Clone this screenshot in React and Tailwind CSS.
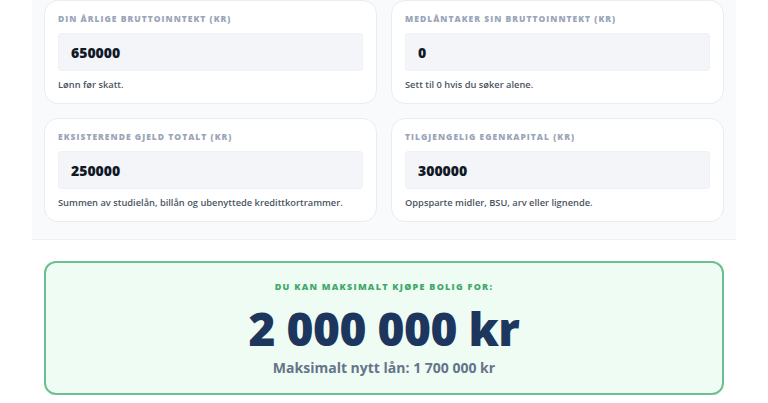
import React from 'react';

const fields = [
    { label: 'Din årlige bruttoinntekt (kr)', value: '650000', help: 'Lønn før skatt.' },
    { label: 'Medlåntaker sin bruttoinntekt (kr)', value: '0', help: 'Sett til 0 hvis du søker alene.' },
    { label: 'Eksisterende gjeld totalt (kr)', value: '250000', help: 'Summen av studielån, billån og ubenyttede kredittkortrammer.' },
    { label: 'Tilgjengelig egenkapital (kr)', value: '300000', help: 'Oppsparte midler, BSU, arv eller lignende.' },
];

const Field = ({ label, value, help }) => (
    <div className="bg-white border border-[#e8edf3] rounded-[14px] px-[13px] pt-[12px] pb-[12px]">
        <label className="block h-[12px] leading-[12px] text-[8.5px] font-extrabold uppercase tracking-[0.12em] text-[#9aa5b8]">
            {label}
        </label>
        <div className="mt-[8px] h-[38px] bg-[#f3f5f8] border border-[#eef1f5] rounded-[3px] flex items-center pl-[12px] text-[14px] font-extrabold text-[#111827]">
            {value}
        </div>
        <p className="mt-[8px] h-[12px] leading-[12px] text-[9.3px] font-semibold text-[#4b5563]">{help}</p>
    </div>
);

export default function App() {
    return (
        <div className="w-[768px] h-[403px] bg-white overflow-hidden" style={{ fontFamily: '"Open Sans", "Noto Sans", sans-serif' }}>
            <div className="mx-[32px] bg-[#f8fafc] border-b border-[#eef1f5] px-[12px] pb-[17px]">
                <div className="grid grid-cols-2 gap-[14px]">
                    {fields.map((f, i) => (
                        <Field key={i} {...f} />
                    ))}
                </div>
            </div>

            <div className="mx-[44px] mt-[21px] h-[134px] bg-[#effcf4] border-2 border-[#6bbf90] rounded-[12px] flex flex-col items-center pt-[17px]">
                <p className="text-[9px] font-extrabold uppercase tracking-[0.14em] text-[#3fa96b] leading-[14px]">
                    Du kan maksimalt kjøpe bolig for:
                </p>
                <p className="mt-[4px] text-[46px] leading-[60px] font-extrabold text-[#1c365e] tracking-[-0.01em]">
                    2 000 000 kr
                </p>
                <p className="mt-[1px] text-[14px] leading-[18px] font-bold text-[#64748b]">
                    Maksimalt nytt lån: 1 700 000 kr
                </p>
            </div>
        </div>
    );
}
